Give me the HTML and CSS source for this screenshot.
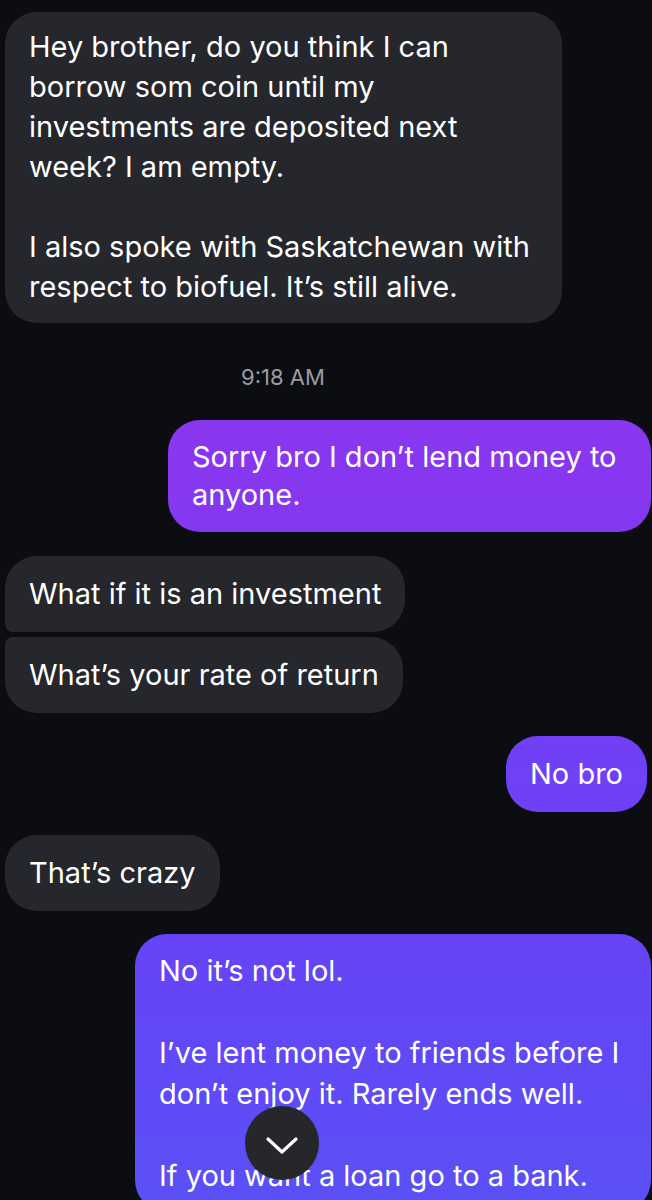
FILE: index.html
```html
<!DOCTYPE html>
<html lang="en">
<head>
  <meta charset="UTF-8" />
  <meta name="viewport" content="width=device-width, initial-scale=1.0"/>
  <title>Messages</title>
  <link rel="stylesheet" href="styles.css">
</head>
<body>

  <div class="thread">
    <div class="msg them big">
      Hey brother, do you think I can<br>borrow som coin until my<br>investments are deposited next<br>week? I am empty.<br><br>I also spoke with Saskatchewan with<br>respect to biofuel. It’s still alive.
    </div>

    <div class="stamp">9:18 AM</div>

    <div class="msg me first">Sorry bro I don’t lend money to<br>anyone.</div>

    <div class="msg them top">What if it is an investment</div>
    <div class="msg them bottom">What’s your rate of return</div>

    <div class="msg me nobro">No bro</div>

    <div class="msg them crazy">That’s crazy</div>

    <div class="msg me last">
      No it’s not lol.<br><br>I’ve lent money to friends before I<br>don’t enjoy it. Rarely ends well.<br><br>If you want a loan go to a bank.
    </div>
  </div>

  <button class="scroll-down" title="Scroll to bottom">
    <svg width="34" height="20" viewBox="0 0 34 20">
      <path d="M3 3 L17 16 L31 3" fill="none" stroke="#fff" stroke-width="3.2" stroke-linecap="round" stroke-linejoin="round"/>
    </svg>
  </button>

</body>
</html>
```

FILE: styles.css
```css
* { box-sizing: border-box; margin: 0; padding: 0; }

body {
  background: #0b0d12;
  color: #fff;
  font-family: Inter, "Noto Sans", sans-serif;
  font-size: 29px;
  height: 1200px;
  overflow: hidden;
}

.thread {
  display: flex;
  flex-direction: column;
  padding: 12px 1px 0 5px;
}

.msg {
  line-height: 38px;
  padding: 19px 24px;
  border-radius: 32px;
  width: fit-content;
  white-space: nowrap;
}

.them {
  background: #25272c;
  align-self: flex-start;
}

.me {
  align-self: flex-end;
  background: linear-gradient(to bottom, #9333ec 0%, #8b36ef 35%, #8438f0 44%, #6f40f6 64%, #6643f7 78%, #5a50f5 100%) fixed;
}

.big {
  width: 557px;
  line-height: 40px;
  padding: 15px 24px 16px;
}

.stamp {
  text-align: center;
  color: #9b9ca1;
  font-size: 22px;
  margin: 41px 0 30px -90px;
}

.first {
  width: 483px;
  padding: 18px 24px;
}

.top {
  margin-top: 24px;
  border-bottom-left-radius: 8px;
}

.bottom {
  margin-top: 5px;
  border-top-left-radius: 8px;
}

.nobro {
  margin-top: 23px;
  margin-right: 4px;
}

.crazy {
  margin-top: 23px;
}

.last {
  width: 516px;
  margin-top: 23px;
  line-height: 41px;
  padding: 16px 24px;
}

.scroll-down {
  position: absolute;
  left: 245px;
  top: 1106px;
  width: 74px;
  height: 74px;
  border-radius: 50%;
  border: none;
  background: #26272b;
  display: flex;
  align-items: center;
  justify-content: center;
  padding-top: 6px;
}
```
